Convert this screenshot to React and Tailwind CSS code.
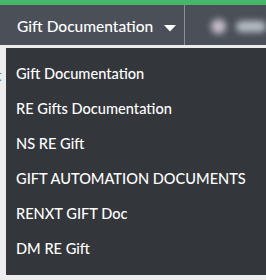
const items = [
  'Gift Documentation',
  'RE Gifts Documentation',
  'NS RE Gift',
  'GIFT AUTOMATION DOCUMENTS',
  'RENXT GIFT Doc',
  'DM RE Gift',
];

export default function App() {
  return (
    <div className="w-[266px] h-[280px] overflow-hidden bg-[#ececec] font-['Lato',sans-serif]">
      {/* top nav */}
      <div className="h-[5px] bg-[#44b868]" />
      <div className="flex h-[40px] bg-[#4b5058]">
        <div className="flex w-[193px] items-center pl-[17px] pt-[3px] text-white">
          <span className="text-[15.5px] font-medium">Gift Documentation</span>
          <svg className="ml-[11px] mt-[3px]" width="12" height="7" viewBox="0 0 12 7">
            <path d="M0 0h12L6 6.5z" fill="#fff" />
          </svg>
        </div>
        <div className="w-px bg-[#8c9097]" />
        <div className="flex flex-1 items-center gap-[10px] pl-[26px] pt-[3px]">
          <div className="h-[15px] w-[15px] rounded-full bg-[#c4bcc8] blur-[3px]" />
          <div className="h-[11px] w-[30px] rounded-full bg-[#b6bec4] blur-[3px]" />
        </div>
      </div>

      {/* dropdown */}
      <div className="flex pt-[3px]">
        <div className="relative w-[6px] overflow-visible">
          <span className="absolute left-[-4px] top-[16px] text-[15px] font-medium text-[#1a8fd0]">t</span>
        </div>
        <ul className="h-[227px] flex-1 bg-[#33363b] pt-[16px]">
          {items.map((item) => (
            <li key={item} className="h-[35px] pl-[10px] text-[14.6px] font-medium leading-[20px] text-white">
              {item}
            </li>
          ))}
        </ul>
      </div>
    </div>
  );
}
